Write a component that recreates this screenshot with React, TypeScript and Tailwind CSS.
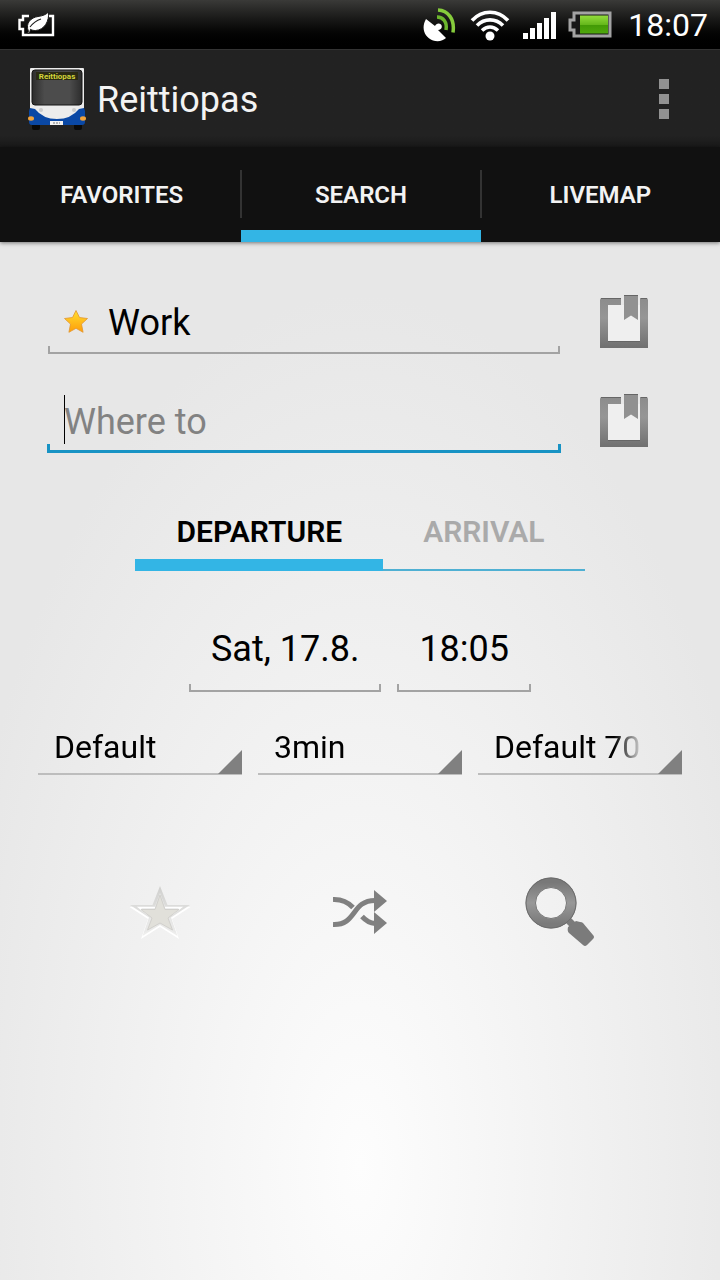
import { useState, type ReactNode } from 'react';
import clsx from 'clsx';

const TABS = ['FAVORITES', 'SEARCH', 'LIVEMAP'];

function StatusBar() {
  return (
    <div className="flex h-[49px] items-center bg-linear-to-b from-[#3a3a38] to-black pr-3 pl-[18px] text-white">
      {/* Power saver */}
      <svg className="h-[26px] w-[37px]" viewBox="0 0 37 26" aria-hidden="true">
        <path d="M11 4H5v4H1.500v9H5v6h30V4h-4" fill="none" stroke="#fff" strokeWidth="2.400" />
        <path
          d="M10.500 19.500C7 11 13 5.500 20 4.500c5-.7 8-2 10.500-4.500 1 9-4 18-13 18.500-2 .1-3.500-.3-5-1.200L11.500 21h-2z"
          fill="#fff"
          stroke="#1c1c1b"
          strokeWidth="1"
        />
        <path d="M12 15c3-4 6.500-6.500 11-8" fill="none" stroke="#1c1c1b" strokeWidth="1.100" />
      </svg>

      <div className="ml-auto flex items-center">
        {/* GPS dish */}
        <svg className="mr-[14px] h-[34px] w-[34px]" viewBox="0 0 34 34" aria-hidden="true">
          <path d="M4 11C-1 20 2 29 11 32.500c5 1.500 10 .5 13-2.500l-8-8c3 0 5-3 3-5.500-2-2-5-1-6 1.500z" fill="#fff" />
          <path d="M15 9c6 0 10.500 5 9 13" fill="none" stroke="#6cb52d" strokeWidth="3.500" />
          <path d="M16 2c10 .5 17 9 15 22.500" fill="none" stroke="#86cc3c" strokeWidth="3.500" />
        </svg>
        {/* Wi-Fi */}
        <svg className="mr-[13px] h-8 w-10" viewBox="0 0 40 32" fill="none" stroke="#fff" strokeWidth="3.600" aria-hidden="true">
          <path d="M2 11.500C12 .5 28 .5 38 11.500" />
          <path d="M7 16.500c7.500-7.500 18.500-7.500 26 0" />
          <path d="M12 21.500c5-4.500 11-4.500 16 0" />
          <circle cx="20" cy="27" r="4.500" fill="#fff" stroke="none" />
        </svg>
        {/* Signal */}
        <svg className="mr-3 h-7 w-[33px]" viewBox="0 0 33 28" fill="#fff" aria-hidden="true">
          <path d="M0 22h5v6H0zM7 17h5v11H7zM14 12h5v16h-5zM21 7h5v21h-5zM28 1h5v27h-5z" />
        </svg>
        {/* Battery */}
        <svg className="mr-4 h-[27px] w-[44px]" viewBox="0 0 44 27" aria-hidden="true">
          <defs>
            <linearGradient id="charge" x1="0" y1="0" x2="0" y2="1">
              <stop offset="0" stopColor="#93dc3c" />
              <stop offset=".5" stopColor="#66b81c" />
              <stop offset=".55" stopColor="#439a06" />
              <stop offset="1" stopColor="#4fa80c" />
            </linearGradient>
          </defs>
          <path d="M6 2h36v23H6v-6H2V9h4z" fill="#171717" stroke="#a3a3a3" strokeWidth="3" />
          <path d="M12 4.500h28v18H12z" fill="url(#charge)" />
        </svg>
        <span className="text-[32px] leading-10">18:07</span>
      </div>
    </div>
  );
}

function BusLogo() {
  return (
    <svg className="h-[62px] w-[58px]" viewBox="0 0 58 62" aria-hidden="true">
      <defs>
        <linearGradient id="windshield" x1="0" y1="0" x2="1" y2="0">
          <stop offset="0" stopColor="#2c2c2c" />
          <stop offset=".25" stopColor="#4c4c4c" />
          <stop offset=".75" stopColor="#4c4c4c" />
          <stop offset="1" stopColor="#2c2c2c" />
        </linearGradient>
      </defs>
      <path d="M4 56h8v4a2 2 0 0 1-2 2H6a2 2 0 0 1-2-2zM46 56h8v4a2 2 0 0 1-2 2h-4a2 2 0 0 1-2-2z" fill="#0a0a0a" />
      <path d="M3 0h52q1 0 1 1v54H2V1q0-1 1-1z" fill="#ececec" />
      <path d="M2 40l5 1q8 10 22 10t22-10l5-1 1 3v11q0 3-3 3H4q-3 0-3-3V43z" fill="#0a48a5" />
      <rect x="4" y="2" width="50" height="35" rx="3" fill="url(#windshield)" stroke="#151515" />
      <rect x="8" y="4" width="42" height="8" fill="#2a2a14" />
      <text x="29" y="11" textAnchor="middle" fontSize="8" fontWeight="700" fill="#d3d63a">Reittiopas</text>
      <circle cx="13" cy="42" r="2" fill="#ccc" />
      <circle cx="46" cy="42" r="2" fill="#ccc" />
      <ellipse cx="3" cy="50.500" rx="3" ry="2.200" fill="#f2a33a" />
      <ellipse cx="55" cy="50.500" rx="3" ry="2.200" fill="#f2a33a" />
      <rect x="22" y="53" width="13" height="4" fill="#f2f2f2" />
      <path d="M25 55h7" stroke="#777" strokeDasharray="2 1" />
    </svg>
  );
}

function BookmarkIcon({ id }: { id: string }) {
  return (
    <svg className="h-14 w-12" viewBox="0 0 48 56" aria-hidden="true">
      <defs>
        <linearGradient id={id} x1="0" y1="0" x2="0" y2="1">
          <stop offset="0" stopColor="#8c8c8c" />
          <stop offset=".4" stopColor="#959595" />
          <stop offset="1" stopColor="#707070" />
        </linearGradient>
      </defs>
      <path d="M8 11h32v36H8z" fill="#efefef" />
      <path d="M2 4h19v7H8v36h32V4h6q2 0 2 2v48H0V6q0-2 2-2z" fill={`url(#${id})`} />
      <path d="M24 1h14v25l-7-4.500-7 4.500z" fill="#919191" />
      <path d="M24 1.500h14M1 4.500h20M41 4.500h6M8 47.500h32" stroke="#666" />
    </svg>
  );
}

/** Holo style underline with a short tick at both ends */
function Underline({ focused = false }: { focused?: boolean }) {
  return (
    <span
      aria-hidden="true"
      className={clsx(
        'pointer-events-none absolute bottom-0',
        focused
          ? '-inset-x-px h-[9px] border-x-3 border-b-3 border-[#1893c4]'
          : 'inset-x-0 h-2 border-x-2 border-b-2 border-[#a3a3a3]',
      )}
    />
  );
}

function PickerButton({ children }: { children: ReactNode }) {
  return (
    <button type="button" className="relative h-[86px] px-[22px] text-[36px] leading-10">
      {children}
      <Underline />
    </button>
  );
}

function Spinner({ label, value }: { label: string; value: string }) {
  return (
    <div className="relative min-w-0 flex-1 border-b-2 border-[#bdbdbd]">
      <select
        aria-label={label}
        className="block h-[52px] w-full appearance-none bg-transparent mask-[linear-gradient(to_right,#000_calc(100%-68px),transparent_calc(100%-38px))] pr-[42px] pl-4 text-[32px] leading-10 outline-none"
      >
        <option>{value}</option>
      </select>
      <svg className="pointer-events-none absolute right-0 -bottom-px size-6" viewBox="0 0 24 24" aria-hidden="true">
        <path d="M24 0v24H0z" fill="#808080" />
      </svg>
    </div>
  );
}

export default function App() {
  const [from, setFrom] = useState('Work');
  const [to, setTo] = useState('');

  return (
    <div className="flex min-h-screen flex-col bg-[radial-gradient(ellipse_58%_68%_at_50%_91%,#fdfdfd,#e7e7e7)] font-[Roboto,sans-serif] text-black">
      <StatusBar />

      <header className="flex h-[98px] items-center border-t border-[#333] bg-linear-to-b from-[#222] from-88% to-[#191919] pr-[51px] pl-7">
        <BusLogo />
        <h1 className="ml-[11px] pt-0.5 text-[36px] leading-10 text-[#f3f3f3]">Reittiopas</h1>
        <button type="button" aria-label="More options" className="ml-auto flex flex-col gap-[5px]">
          <span className="size-[10px] bg-[#929292]" />
          <span className="size-[10px] bg-[#929292]" />
          <span className="size-[10px] bg-[#929292]" />
        </button>
      </header>

      <nav className="flex h-[95px] bg-[#111] pl-0.5 shadow-[0_1px_4px_rgba(0,0,0,0.5)]">
        {TABS.map((tab, i) => (
          <button
            key={tab}
            type="button"
            className="relative flex-1 text-[24px] leading-8 font-semibold text-[#f3f3f3]"
          >
            {tab}
            {i > 0 && <span className="absolute top-[23px] -left-px h-12 w-0.5 bg-[#333]" />}
            {tab === 'SEARCH' && <span className="absolute inset-x-0 bottom-0 h-3 bg-[#33b5e5]" />}
          </button>
        ))}
      </nav>

      <main>
        <form className="pt-12" onSubmit={(e) => e.preventDefault()}>
          <div className="flex flex-col gap-[35px] pr-[72px] pl-12">
            <div className="flex items-center gap-10">
              <div className="relative flex h-16 min-w-0 flex-1 items-center gap-5 px-4">
                <svg className="size-6 shrink-0" viewBox="0 0 24 24" aria-hidden="true">
                  <defs>
                    <linearGradient id="gold" x1="0" y1="0" x2="0" y2="1">
                      <stop offset="0" stopColor="#ffdf30" />
                      <stop offset="1" stopColor="#ff9c08" />
                    </linearGradient>
                  </defs>
                  <path
                    d="M12 .5l3.500 7 8 1-6 5.600 1.600 8.200-7.100-4-7.100 4 1.600-8.200-6-5.600 8-1z"
                    fill="url(#gold)"
                    stroke="#e2952f"
                    strokeWidth=".8"
                  />
                </svg>
                <input
                  aria-label="Where from"
                  className="w-full min-w-0 bg-transparent pt-0.5 text-[36px] leading-10 outline-none"
                  value={from}
                  onChange={(e) => setFrom(e.target.value)}
                />
                <Underline />
              </div>
              <button type="button" aria-label="Pick start place">
                <BookmarkIcon id="bookmark-from" />
              </button>
            </div>

            <div className="flex items-center gap-10">
              <div className="relative flex h-16 min-w-0 flex-1 items-center px-4">
                <span className="absolute top-1.5 left-4 h-[49px] w-px bg-black" />
                <input
                  aria-label="Destination"
                  className="w-full min-w-0 bg-transparent pt-0.5 text-[36px] leading-10 caret-transparent outline-none placeholder:text-[#828282]"
                  placeholder="Where to"
                  value={to}
                  onChange={(e) => setTo(e.target.value)}
                />
                <Underline focused />
              </div>
              <button type="button" aria-label="Pick destination">
                <BookmarkIcon id="bookmark-to" />
              </button>
            </div>
          </div>

          <div className="mt-10 flex justify-center text-[30px] leading-10 font-semibold">
            <button type="button" className="h-[78px] border-b-12 border-[#33b5e5] px-[41px] pt-3">
              DEPARTURE
            </button>
            <button type="button" className="h-[78px] border-b-2 border-[#4fb0d3] px-10 pt-0.5 text-[#aaa]">
              ARRIVAL
            </button>
          </div>

          <div className="mt-[35px] flex justify-center gap-4">
            <PickerButton>Sat, 17.8.</PickerButton>
            <PickerButton>18:05</PickerButton>
          </div>

          <div className="mt-[29px] flex gap-4 px-[38px]">
            <Spinner label="Route type" value="Default" />
            <Spinner label="Transfer time" value="3min" />
            <Spinner label="Walking speed" value="Default 70" />
          </div>

          <div className="mt-[89px] grid grid-cols-3 px-[60px]">
            <button type="button" aria-label="Save as favorite" className="flex h-24 items-center justify-center">
              <svg className="h-[54px] w-[62px]" viewBox="0 0 62 54" aria-hidden="true">
                <defs>
                  <linearGradient id="silver" x1="0" y1="0" x2="0" y2="1">
                    <stop offset="0" stopColor="#d0d0ce" />
                    <stop offset="1" stopColor="#efefee" />
                  </linearGradient>
                </defs>
                <path d="M31 3l7.500 19h23L43 34l7 20-19-12-19 12 7-20L.5 22h23z" fill="#fff" />
                <path d="M31 1l7.500 19h22.500L42 32.500 48.500 51 31 40 13.500 51 20 32.500 1 20h22.500z" fill="url(#silver)" />
                <path d="M25.500 22.500H9l12 9.500-6 16 16-10 16 10-6-16 12-9.500H36.500L31 8z" fill="#e9e9e8" />
                <path d="M26 22.500H10l9 7M36 22.500h16l-9 7" fill="none" stroke="#fff" strokeWidth="1.500" />
                <path
                  d="M31 10l5 14.500h14L39 33l4.500 12L31 38l-12.500 7L23 33l-11-8.500h14z"
                  fill="#e1e0da"
                  stroke="#cbcac6"
                  strokeWidth=".8"
                />
              </svg>
            </button>
            <button type="button" aria-label="Swap places" className="flex h-24 items-center justify-center">
              <svg className="h-11 w-[54px]" viewBox="0 0 54 44" aria-hidden="true">
                <path
                  d="M0 34.500c24 1 18-24 42-24M0 9.500q12-.5 20 8M29 26.500q6 6.500 13 7"
                  fill="none"
                  stroke="#808080"
                  strokeWidth="5"
                />
                <path d="M41 0l13 11-13 11zM41 22l13 11-13 11z" fill="#808080" />
              </svg>
            </button>
            <button type="submit" aria-label="Search" className="flex h-24 items-center justify-center">
              <svg className="size-[70px]" viewBox="0 0 70 70" aria-hidden="true">
                <defs>
                  <linearGradient id="lens" x1="0" y1="0" x2="0" y2="1">
                    <stop offset="0" stopColor="#787878" />
                    <stop offset=".5" stopColor="#989898" />
                    <stop offset="1" stopColor="#7a7a7a" />
                  </linearGradient>
                </defs>
                <path d="M40 40l9 9" stroke="#7b7b7b" strokeWidth="7" />
                <path d="M43 50l8-6 4 1q2 0 3 1l10 12q2 2 0 4l-6 6q-2 2-4 0L44 56q-2-2-1-6z" fill="#7b7b7b" />
                <circle cx="26" cy="26" r="20.500" fill="none" stroke="url(#lens)" strokeWidth="10" />
                <circle cx="26" cy="26" r="25" fill="none" stroke="#6c6c6c" strokeWidth="1" />
                <circle cx="26" cy="26" r="15.500" fill="none" stroke="#777" strokeWidth="1" />
              </svg>
            </button>
          </div>
        </form>
      </main>
    </div>
  );
}
